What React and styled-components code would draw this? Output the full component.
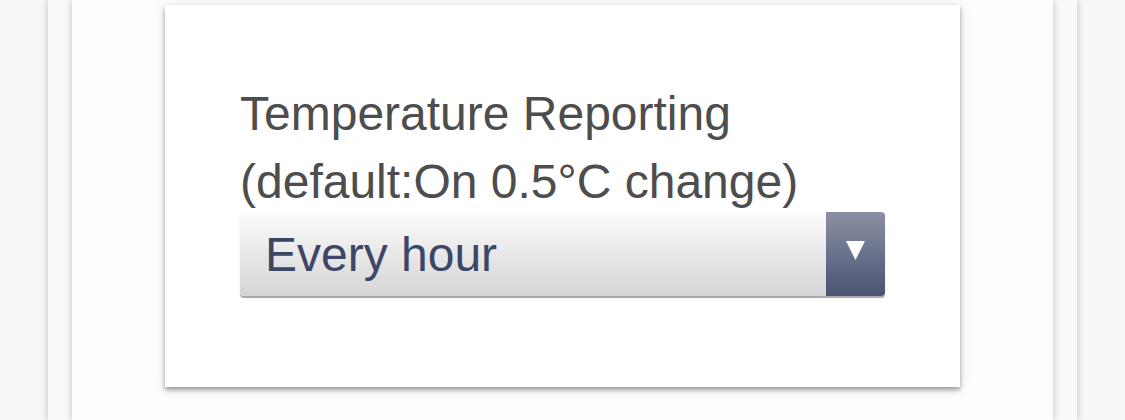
import styled, { createGlobalStyle } from 'styled-components';

const GlobalStyle = createGlobalStyle`
  html, body {
    margin: 0;
    padding: 0;
    background: #f8f8f8;
    font-family: "Liberation Sans", Arial, sans-serif;
  }
`;

const Page = styled.div`
  height: 420px;
  overflow: hidden;
  padding: 0 48px;
`;

const Panel = styled.div`
  flex: 1;
  height: 100%;
  box-sizing: border-box;
  background: ${(p) => (p.$inner ? '#fdfdfd' : '#fafafa')};
  box-shadow: -2px 0 7px rgba(0, 0, 0, 0.12), 2px 0 7px rgba(0, 0, 0, 0.12);
  padding: ${(p) => (p.$inner ? '5px 0 0' : '0 24px')};
  display: flex;
  justify-content: center;
  align-items: flex-start;
`;

const Card = styled.div`
  width: 795px;
  box-sizing: border-box;
  background: #fff;
  padding: 75px 75px 91px;
  box-shadow: 0 3px 5px rgba(0, 0, 0, 0.38), 0 0 14px rgba(0, 0, 0, 0.07);
`;

const Label = styled.div`
  font-size: 48px;
  line-height: 68px;
  color: #4d4d4d;
`;

const Select = styled.div`
  margin-top: -4px;
  width: 645px;
  height: 84px;
  display: flex;
  border-radius: 4px;
  overflow: hidden;
  background: linear-gradient(#fbfbfb, #d5d5d5);
  box-shadow: 0 2px 1px rgba(0, 0, 0, 0.35);
`;

const Value = styled.div`
  flex: 1;
  display: flex;
  align-items: center;
  padding-left: 25px;
  font-size: 48px;
  color: #3d4667;
`;

const ArrowButton = styled.div`
  width: 59px;
  display: flex;
  align-items: center;
  justify-content: center;
  background: linear-gradient(#8c90a4, #4a5373);
  padding-bottom: 8px;
  box-sizing: border-box;
`;

export default function App() {
  return (
    <>
      <GlobalStyle />
      <Page>
        <Panel>
          <Panel $inner>
            <Card>
              <Label>
                Temperature Reporting
                <br />
                (default:On 0.5°C change)
              </Label>
              <Select role="listbox">
                <Value>Every hour</Value>
                <ArrowButton>
                  <svg width="19" height="20" viewBox="0 0 19 20">
                    <polygon points="0,1 19,1 9.5,20" fill="#fff" />
                  </svg>
                </ArrowButton>
              </Select>
            </Card>
          </Panel>
        </Panel>
      </Page>
    </>
  );
}
